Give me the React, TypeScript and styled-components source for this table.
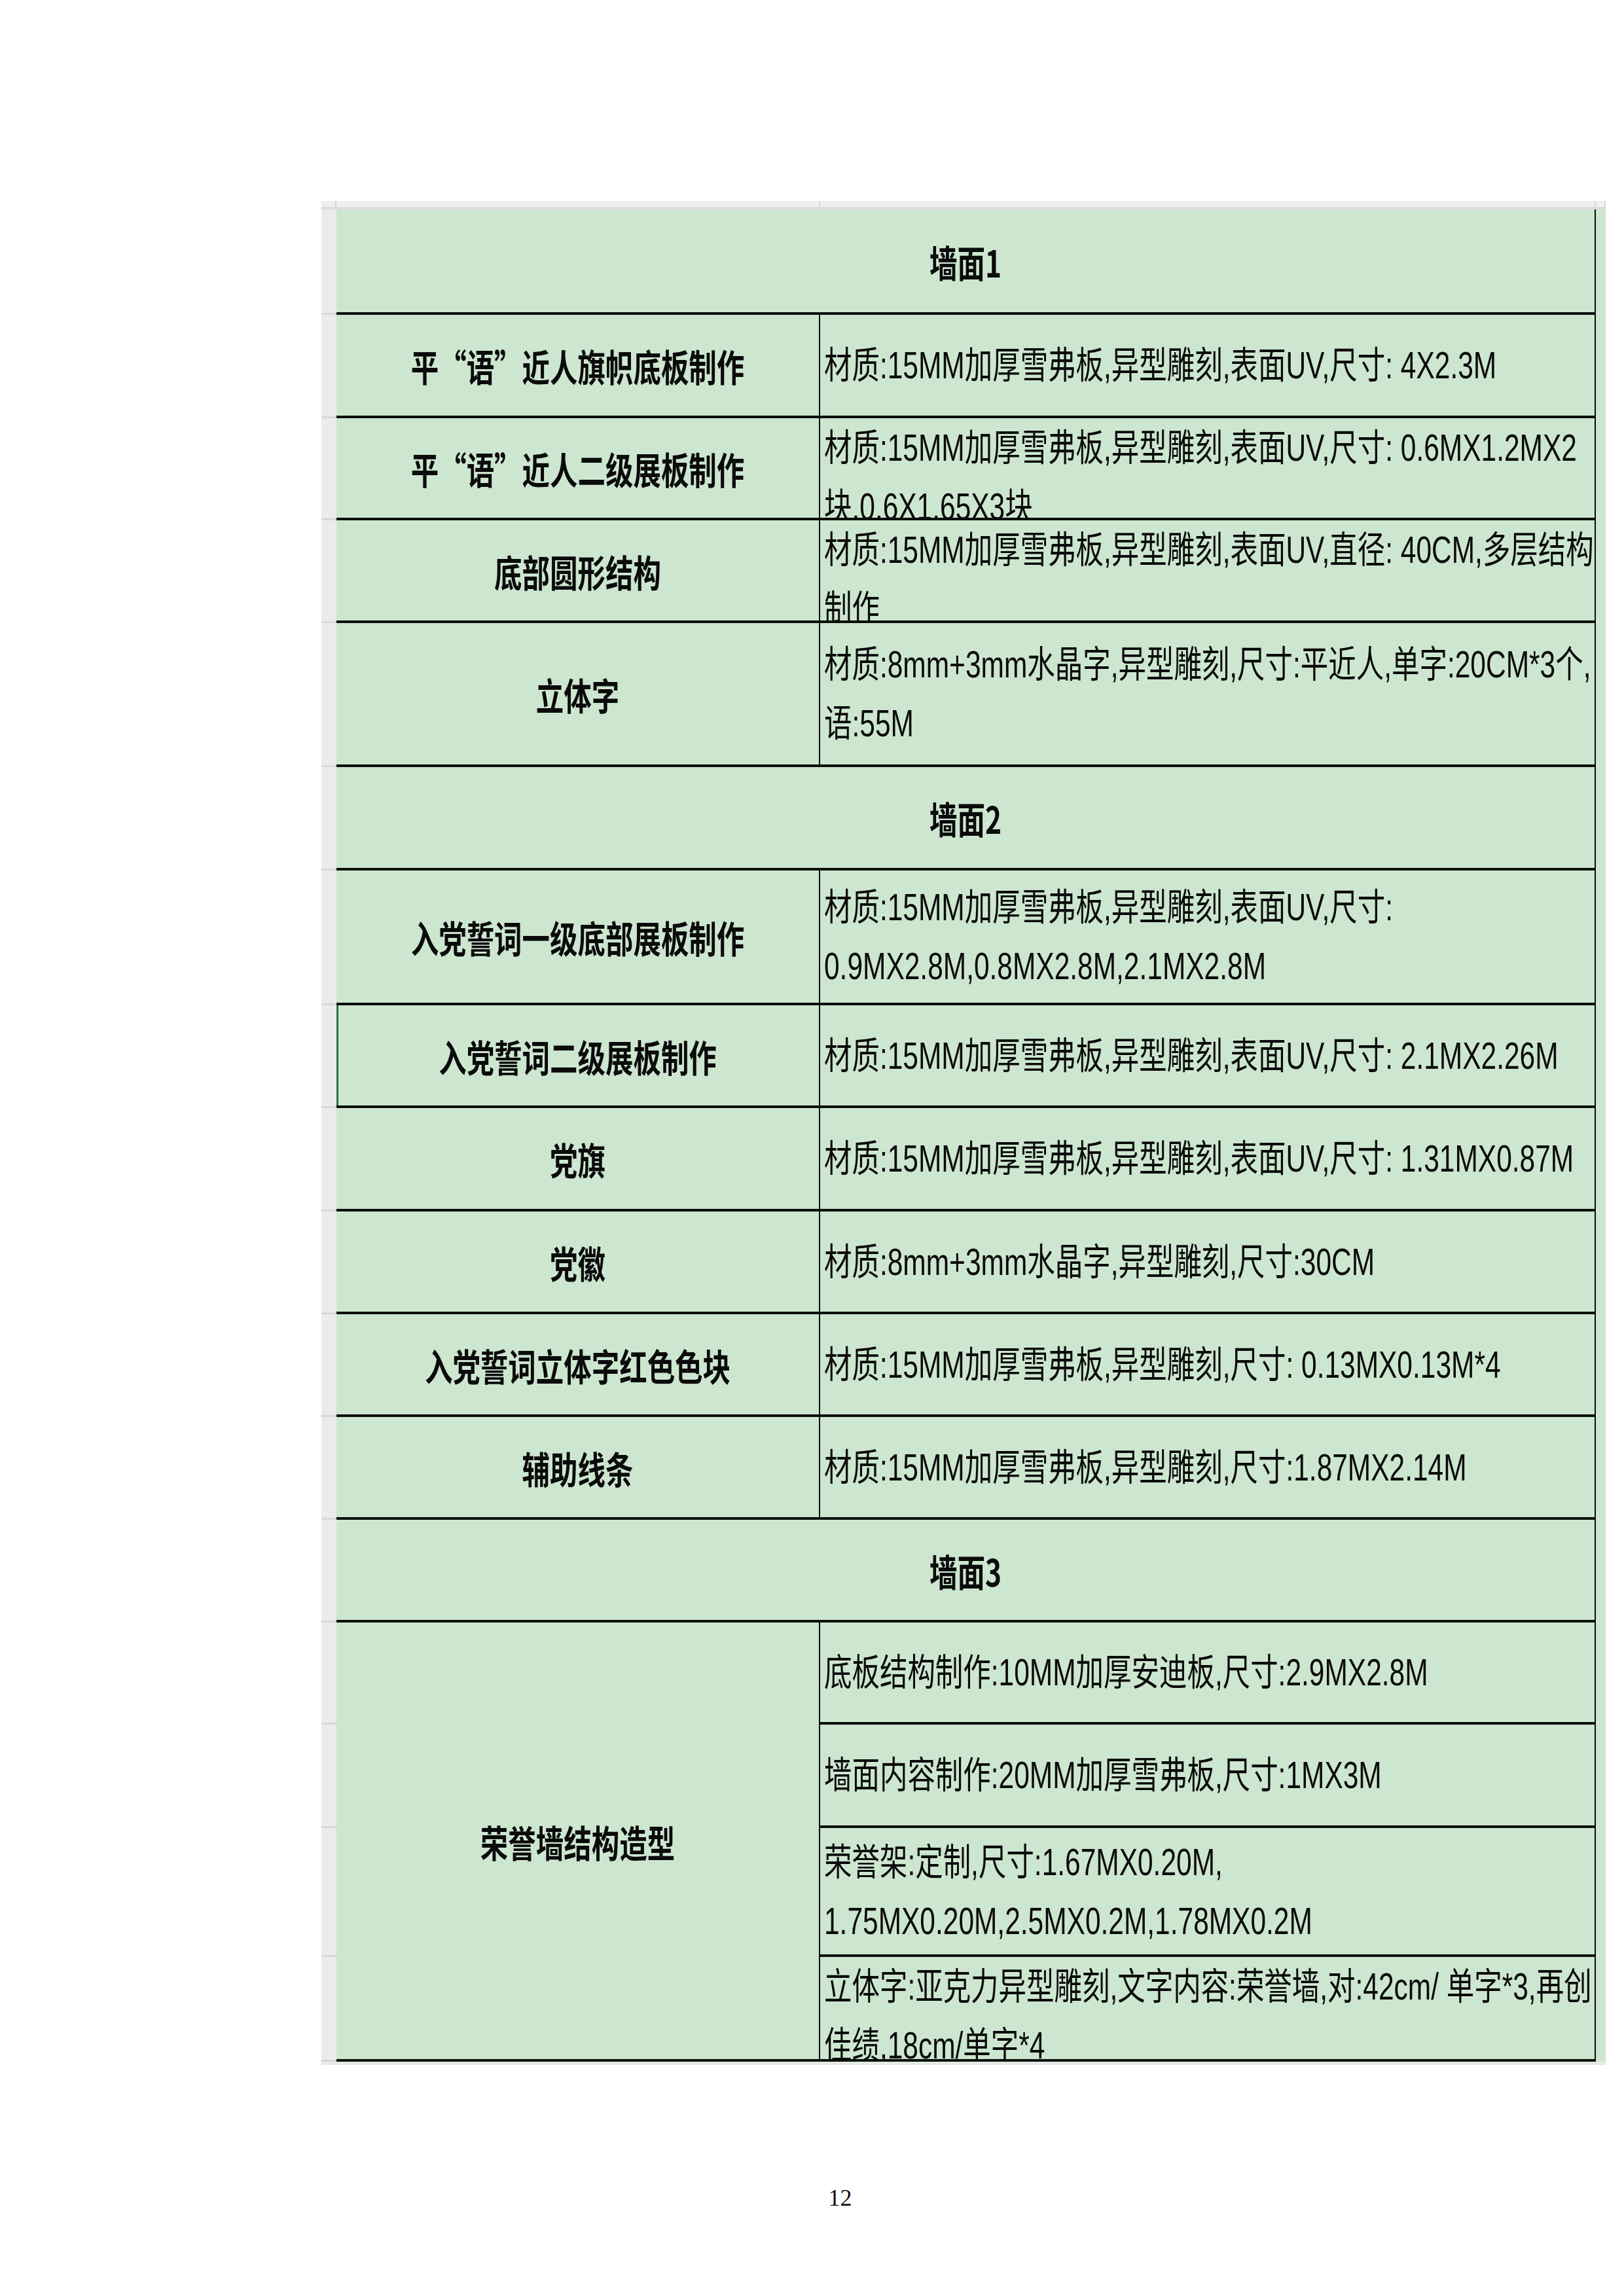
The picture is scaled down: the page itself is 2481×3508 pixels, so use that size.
import React from 'react'
import styled, { createGlobalStyle } from 'styled-components'

// the sheet text is squeezed horizontally, like the printed spreadsheet
const SX = 0.745
const GREEN = '#cde6d0'
const INK = '#0a0f0a'

interface Item {
  label: string
  lines: string[]
  h: number
  selected?: boolean
}

interface Group {
  label: string
  items: { lines: string[]; h: number }[]
}

interface Section {
  title: string
  h: number
  rows: (Item | Group)[]
}

const SECTIONS: Section[] = [
  {
    title: '墙面1',
    h: 161,
    rows: [
      { label: '平“语”近人旗帜底板制作', lines: ['材质:15MM加厚雪弗板,异型雕刻,表面UV,尺寸: 4X2.3M'], h: 158 },
      {
        label: '平“语”近人二级展板制作',
        lines: ['材质:15MM加厚雪弗板,异型雕刻,表面UV,尺寸: 0.6MX1.2MX2', '块,0.6X1.65X3块'],
        h: 156,
      },
      {
        label: '底部圆形结构',
        lines: ['材质:15MM加厚雪弗板,异型雕刻,表面UV,直径: 40CM,多层结构', '制作'],
        h: 157,
      },
      {
        label: '立体字',
        lines: ['材质:8mm+3mm水晶字,异型雕刻,尺寸:平近人,单字:20CM*3个,', '语:55M'],
        h: 220,
      },
    ],
  },
  {
    title: '墙面2',
    h: 158,
    rows: [
      {
        label: '入党誓词一级底部展板制作',
        lines: ['材质:15MM加厚雪弗板,异型雕刻,表面UV,尺寸:', '0.9MX2.8M,0.8MX2.8M,2.1MX2.8M'],
        h: 206,
      },
      {
        label: '入党誓词二级展板制作',
        lines: ['材质:15MM加厚雪弗板,异型雕刻,表面UV,尺寸: 2.1MX2.26M'],
        h: 157,
        selected: true,
      },
      { label: '党旗', lines: ['材质:15MM加厚雪弗板,异型雕刻,表面UV,尺寸: 1.31MX0.87M'], h: 158 },
      { label: '党徽', lines: ['材质:8mm+3mm水晶字,异型雕刻,尺寸:30CM'], h: 157 },
      { label: '入党誓词立体字红色色块', lines: ['材质:15MM加厚雪弗板,异型雕刻,尺寸: 0.13MX0.13M*4'], h: 157 },
      { label: '辅助线条', lines: ['材质:15MM加厚雪弗板,异型雕刻,尺寸:1.87MX2.14M'], h: 157 },
    ],
  },
  {
    title: '墙面3',
    h: 157,
    rows: [
      {
        label: '荣誉墙结构造型',
        items: [
          { lines: ['底板结构制作:10MM加厚安迪板,尺寸:2.9MX2.8M'], h: 156 },
          { lines: ['墙面内容制作:20MM加厚雪弗板,尺寸:1MX3M'], h: 158 },
          { lines: ['荣誉架:定制,尺寸:1.67MX0.20M,', '1.75MX0.20M,2.5MX0.2M,1.78MX0.2M'], h: 197 },
          { lines: ['立体字:亚克力异型雕刻,文字内容:荣誉墙,对:42cm/ 单字*3,再创', '佳绩,18cm/单字*4'], h: 160 },
        ],
      },
    ],
  },
]

const isGroup = (row: Item | Group): row is Group => 'items' in row

const stripHeights = SECTIONS.flatMap((s) => [
  s.h,
  ...s.rows.flatMap((r) => (isGroup(r) ? r.items.map((i) => i.h) : [r.h])),
])

const GlobalStyle = createGlobalStyle`
  html, body {
    margin: 0;
    padding: 0;
    background: #ffffff;
    overflow-x: hidden;
  }
  * {
    box-sizing: border-box;
  }
`

const Page = styled.div`
  width: 2481px;
  min-height: 3508px;
  padding-top: 307px;
  display: flex;
  flex-direction: column;
  background: #ffffff;
  overflow: hidden;
`

const Sheet = styled.div`
  margin-left: 491px;
  width: 1962px;
  background: #ececec;
`

const ColStrip = styled.div`
  display: flex;
  height: 13px;
  background: #efefef;
  border-bottom: 4px solid #dcdcdc;
`

const ColCell = styled.div<{ $w?: number }>`
  flex: ${(p) => (p.$w ? `0 0 ${p.$w}px` : '1')};
  border-right: 2px solid #d6d6d6;
`

const Body = styled.div`
  display: flex;
`

const RowStrip = styled.div`
  width: 23px;
  display: flex;
  flex-direction: column;
`

const StripCell = styled.div<{ $h: number }>`
  height: ${(p) => p.$h}px;
  border-bottom: 3px solid #d7d7d7;
  background: #ebebeb;
`

const Table = styled.div`
  width: 1924px;
  min-width: 0;
  background: ${GREEN};
  border-right: 2px solid ${INK};
  display: flex;
  flex-direction: column;
  overflow: hidden;
`

const Gutter = styled.div`
  flex: 1;
  background: ${GREEN};
`

const BottomPad = styled.div`
  height: 5px;
  background: #e3ebe3;
`

const HeaderRow = styled.div<{ $h: number }>`
  height: ${(p) => p.$h}px;
  border-bottom: 4px solid ${INK};
  display: flex;
  align-items: center;
  overflow: hidden;
  font-family: 'Noto Sans CJK SC', sans-serif;
  font-weight: 700;
  font-size: 57px;
  color: #0b0b0b;
`

const Row = styled.div<{ $h?: number }>`
  display: flex;
  min-width: 0;
  ${(p) => (p.$h ? `height: ${p.$h}px;` : '')}
`

const LabelCell = styled.div<{ $selected?: boolean }>`
  flex: 0 0 739px;
  min-width: 0;
  border-right: 2px solid ${INK};
  border-bottom: 4px solid ${INK};
  display: flex;
  flex-direction: column;
  justify-content: safe center;
  align-items: flex-start;
  overflow: hidden;
  font-family: 'Noto Sans CJK SC', sans-serif;
  font-weight: 700;
  font-size: 57px;
  color: #0b0b0b;
  box-shadow: ${(p) => (p.$selected ? 'inset 3px 0 0 #217346' : 'none')};
`

const SubColumn = styled.div`
  flex: 1 1 0;
  min-width: 0;
  display: flex;
  flex-direction: column;
`

const DataCell = styled.div<{ $h?: number }>`
  flex: ${(p) => (p.$h ? `0 0 ${p.$h}px` : '1 1 0')};
  min-width: 0;
  border-bottom: 4px solid ${INK};
  padding: 0 2px 0 6px;
  display: flex;
  flex-direction: column;
  justify-content: safe center;
  align-items: flex-start;
  overflow: hidden;
  font-family: 'Liberation Sans', 'Noto Sans CJK SC', sans-serif;
  font-weight: 400;
  font-size: 57px;
  color: #0b0b0b;
`

const Squeeze = styled.div<{ $align: 'left' | 'center' }>`
  width: ${100 / SX}%;
  flex-shrink: 0;
  transform: scaleX(${SX});
  transform-origin: left center;
  text-align: ${(p) => p.$align};
`

const Line = styled.div`
  white-space: nowrap;
  line-height: 90px;
`

const PageNo = styled.div`
  margin-top: 185px;
  padding-left: 86px;
  text-align: center;
  font-family: 'Liberation Serif', serif;
  font-size: 36px;
  line-height: 36px;
  color: #111;
`

const Lines: React.FC<{ lines: string[] }> = ({ lines }) => (
  <Squeeze $align="left">
    {lines.map((l) => (
      <Line key={l}>{l}</Line>
    ))}
  </Squeeze>
)

const Label: React.FC<{ text: string }> = ({ text }) => (
  <Squeeze $align="center">
    <Line>{text}</Line>
  </Squeeze>
)

const App: React.FC = () => {
  return (
    <>
      <GlobalStyle />
      <Page>
        <Sheet>
          <ColStrip>
            <ColCell $w={23} />
            <ColCell $w={739} />
            <ColCell $w={1185} />
            <ColCell />
          </ColStrip>
          <Body>
            <RowStrip>
              {stripHeights.map((h, i) => (
                <StripCell key={i} $h={h} />
              ))}
            </RowStrip>
            <Table>
              {SECTIONS.map((section) => (
                <React.Fragment key={section.title}>
                  <HeaderRow $h={section.h}>
                    <Label text={section.title} />
                  </HeaderRow>
                  {section.rows.map((row) =>
                    isGroup(row) ? (
                      <Row key={row.label}>
                        <LabelCell>
                          <Label text={row.label} />
                        </LabelCell>
                        <SubColumn>
                          {row.items.map((item) => (
                            <DataCell key={item.lines[0]} $h={item.h}>
                              <Lines lines={item.lines} />
                            </DataCell>
                          ))}
                        </SubColumn>
                      </Row>
                    ) : (
                      <Row key={row.label} $h={row.h}>
                        <LabelCell $selected={row.selected}>
                          <Label text={row.label} />
                        </LabelCell>
                        <DataCell>
                          <Lines lines={row.lines} />
                        </DataCell>
                      </Row>
                    ),
                  )}
                </React.Fragment>
              ))}
            </Table>
            <Gutter />
          </Body>
          <BottomPad />
        </Sheet>
        <PageNo>12</PageNo>
      </Page>
    </>
  )
}

export default App
